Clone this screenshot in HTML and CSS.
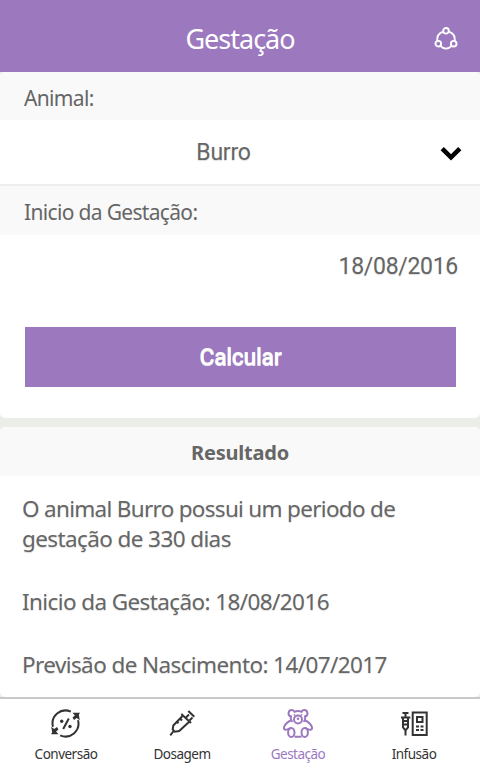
FILE: index.html
```html
<!DOCTYPE html>
<html lang="pt-BR">

<head>
    <meta charset="UTF-8">
    <meta name="viewport" content="width=device-width, initial-scale=1.0">
    <title>Gestação</title>
    <link rel="stylesheet" href="styles.css">
</head>

<body>
    <header class="header">
        <h1 class="title">Gestação</h1>
        <svg class="share-icon" viewBox="0 0 24 24">
            <circle cx="12" cy="3.800" r="2.800" />
            <circle cx="4.300" cy="16.700" r="2.800" />
            <circle cx="19.700" cy="16.700" r="2.800" />
            <path d="M9.300 4.600C5 6 2.800 9.800 3.200 13.900M14.700 4.600c4.300 1.400 6.500 5.200 6.100 9.300M6.600 19.200c3 3.200 7.800 3.200 10.800 0" />
        </svg>
    </header>

    <main class="content">
        <form class="card">
            <div class="label">Animal:</div>
            <div class="select-row">
                <span class="select-value">Burro</span>
                <svg class="arrow" viewBox="0 0 22 15">
                    <path d="M2.200 2.700l8.800 8.600 8.800-8.600" />
                </svg>
            </div>
            <div class="label label-start">Inicio da Gestação:</div>
            <div class="date-row"><span class="date">18/08/2016</span></div>
            <button class="calc-button" type="button">Calcular</button>
        </form>

        <section class="card result">
            <h2 class="result-title">Resultado</h2>
            <div class="result-text">
                <p>O animal Burro possui um periodo de<br><span class="line-days">gestação de 330 dias</span></p>
                <p class="line-dates">Inicio da Gestação: 18/08/2016</p>
                <p class="line-dates">Previsão de Nascimento: 14/07/2017</p>
            </div>
        </section>
    </main>

    <nav class="tabs">
        <a class="tab">
            <svg class="tab-icon" viewBox="0 0 32 32">
                <path d="M3 18.800A12.900 12.900 0 0 1 20.800 3.700M28 12.200A12.900 12.900 0 0 1 10.200 27.300" />
                <path d="M18.800 10.500l-5.600 10.500" />
                <path class="fill" d="M22.500 4.700H30l-1.200 2.100 1 5.400-3-2.200-2.800 2-1.500-2.500 2.400-2zM8.500 26.300H1l1.200-2.100-1-5.400 3 2.200 2.800-2 1.500 2.500-2.400 2z" />
                <circle class="fill" cx="11.700" cy="13.300" r="1.700" />
                <circle class="fill" cx="20" cy="18.500" r="1.700" />
            </svg>
            <span class="tab-text">Conversão</span>
        </a>
        <a class="tab">
            <svg class="tab-icon" viewBox="0 0 32 32">
                <path d="M16.500 8L7.300 17.500l-.6 4 2 2.200 4.500-.7 10-9.300M8 22.500l-3.700 4.800" />
                <path d="M15.300 6l9.700 9" />
                <path d="M20 9.500l3-3M23.500 12.500l3-3M22.300 3l6 5.800M14 10.500l2 2M11 13.700l1.500 1.500" />
            </svg>
            <span class="tab-text">Dosagem</span>
        </a>
        <a class="tab active">
            <svg class="tab-icon" viewBox="0 0 32 32">
                <path d="M8.500 8.500c-3.200-1.500-2.200-6.400 1.200-6.400 1.300 0 2.200.6 2.800 1.600 2.300-.8 4.700-.8 7 0 .6-1 1.500-1.600 2.800-1.600 3.400 0 4.400 4.900 1.200 6.400" />
                <path d="M9.300 7.300c-1 2.800-.5 5.200 1.300 6.500M22.700 7.300c1 2.800.5 5.200-1.300 6.500" />
                <circle cx="16" cy="11.500" r="4" />
                <path d="M9.700 12c-3.800 1.600-6.500 4-7.600 6.800-.8 2.400 1.200 3.500 3.400 2.600l3.500-1.600M22.300 12c3.800 1.600 6.500 4 7.600 6.800.8 2.400-1.200 3.500-3.400 2.600L23 19.800M12.500 28.800h7" />
                <ellipse cx="9.300" cy="24.600" rx="3.200" ry="4.500" />
                <ellipse cx="22.700" cy="24.600" rx="3.200" ry="4.500" />
                <circle class="fill" cx="12.500" cy="6.800" r=".9" />
                <circle class="fill" cx="19.500" cy="6.800" r=".9" />
                <circle class="fill" cx="16" cy="10.700" r="1.300" />
            </svg>
            <span class="tab-text">Gestação</span>
        </a>
        <a class="tab">
            <svg class="tab-icon" viewBox="0 0 32 32">
                <path d="M4.500 5h6M7.500 5v4M3 9.500h9.300M5 10v9.500l2.500 3 2.500-3V10M7.500 22v5.500M6 13h3M6 16.500h3" />
                <path d="M14.700 4.500h14v22.500h-14zM19 9h5.500v5H19z" />
                <path class="fill" d="M18 17.500h3v2h-3zM22.500 17.500h3v2h-3zM18 21h3v2h-3zM22.500 21h3v2h-3z" />
            </svg>
            <span class="tab-text">Infusão</span>
        </a>
    </nav>
</body>

</html>
```
FILE: styles.css
```css
* {
    box-sizing: border-box;
}

body {
    margin: 0;
    height: 772px;
    display: flex;
    flex-direction: column;
    overflow: hidden;
    font-family: "Noto Sans", "Open Sans", sans-serif;
    color: #666;
    background-color: #ebede8;
}

svg {
    display: block;
    fill: none;
    stroke: currentColor;
}

.header {
    height: 72px;
    flex-shrink: 0;
    display: grid;
    grid-template-columns: 46px 1fr 46px;
    align-items: center;
    color: #fff;
    background-color: #9c78bf;
}

.title {
    grid-column: 2;
    margin: 0;
    padding-top: 6px;
    text-align: center;
    font-size: 27px;
    line-height: 36px;
    font-weight: 400;
    letter-spacing: -1px;
}

.share-icon {
    width: 24px;
    height: 24px;
    margin-top: 5px;
    stroke-width: 1.9;
}

.content {
    flex: 1;
    display: flex;
    flex-direction: column;
    gap: 9px;
    min-height: 0;
}

.card {
    overflow: hidden;
    border-radius: 5px;
    background-color: #fff;
}

form.card {
    height: 346px;
    flex-shrink: 0;
    display: flex;
    flex-direction: column;
}

.label {
    height: 48px;
    padding: 2px 24px 0;
    font-size: 21px;
    line-height: 48px;
    letter-spacing: -0.67px;
    background-color: #f9f9f9;
}

.label-start {
    height: 49px;
}

.select-row {
    height: 66px;
    display: grid;
    grid-template-columns: 7px 1fr 22px 18px;
    align-items: center;
    border-bottom: 2px solid #eee;
}

.select-value {
    grid-column: 2;
    text-align: center;
    font-family: Roboto, sans-serif;
    font-size: 23px;
    letter-spacing: -0.2px;
    text-shadow: 0 1px 1px #ddd;
}

.arrow {
    width: 22px;
    height: 15px;
    margin-top: 2px;
    color: #000;
    stroke-width: 4.6;
}

.date-row {
    height: 92px;
    padding: 17px 22px 0;
    text-align: right;
    font-family: Roboto, sans-serif;
    font-size: 23px;
    line-height: 30px;
    letter-spacing: -0.3px;
    text-shadow: 0 1px 1px #ddd;
}

.calc-button {
    height: 60px;
    margin: 0 24px 0 25px;
    padding: 1px 0 0;
    border: none;
    font-family: Roboto, sans-serif;
    font-size: 23px;
    font-weight: 500;
    letter-spacing: -0.3px;
    color: #fff;
    text-shadow: 0 1px 0 #eee;
    background-color: #9c78bf;
}

.result {
    flex: 1;
}

.result-title {
    height: 49px;
    margin: 0;
    padding-top: 1px;
    text-align: center;
    font-size: 20px;
    line-height: 50px;
    font-weight: 700;
    letter-spacing: -0.2px;
    background-color: #f9f9f9;
}

.result-text {
    padding: 18px 22px 0;
    font-size: 22.5px;
    line-height: 30px;
    letter-spacing: -0.7px;
    text-shadow: 0 1px 1px #ddd;
}

.result-text p {
    margin: 0 0 33px;
    white-space: nowrap;
}

.line-days {
    letter-spacing: -0.6px;
}

.result-text .line-dates {
    letter-spacing: -0.6px;
}

.tabs {
    height: 75px;
    flex-shrink: 0;
    display: grid;
    grid-template-columns: repeat(4, 116px);
    justify-content: center;
    border-top: 2px solid #c8cac9;
    background-color: #fff;
}

.tab {
    display: flex;
    flex-direction: column;
    align-items: center;
    padding-top: 9px;
    color: #333;
}

.tab.active {
    color: #9c78bf;
}

.tab-icon {
    width: 32px;
    height: 32px;
    stroke-width: 2;
}

.fill {
    fill: currentColor;
    stroke: none;
}

.tab-text {
    margin-top: 4px;
    font-size: 13.5px;
    line-height: 20px;
    letter-spacing: -0.5px;
}
```
